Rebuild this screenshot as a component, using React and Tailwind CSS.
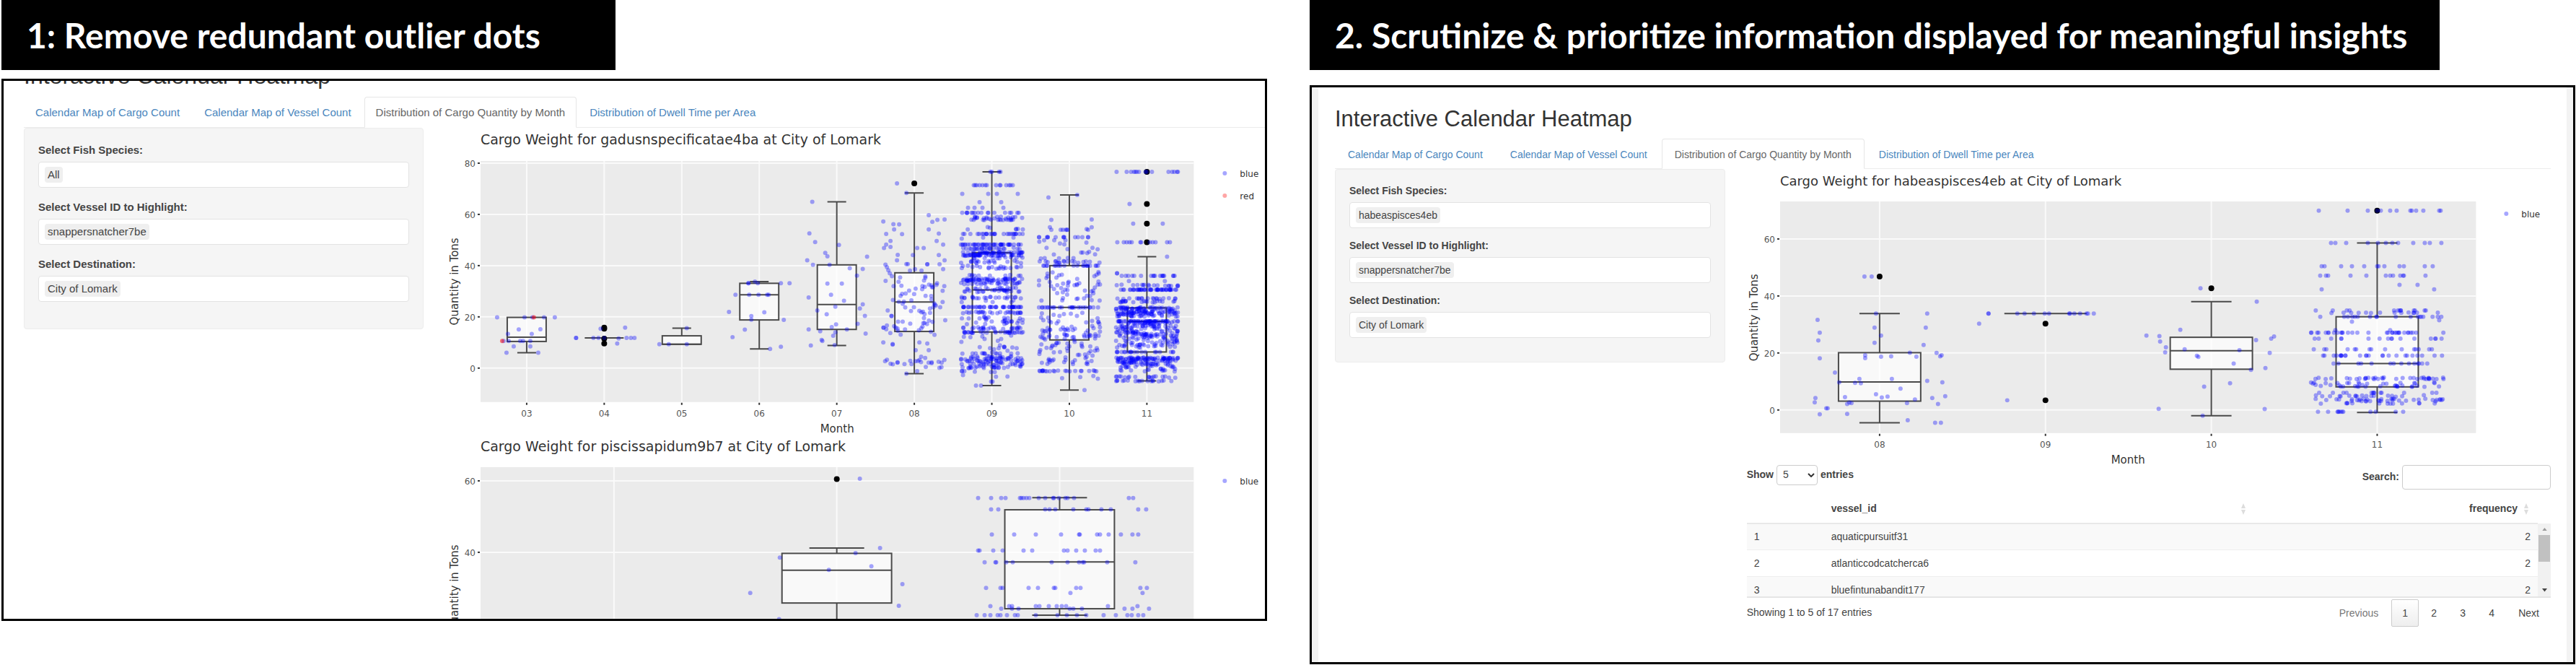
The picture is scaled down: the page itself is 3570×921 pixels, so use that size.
import { useState } from "react";

// small seeded generator so the jitter is the same on every render
const seeded = (seed) => {
  let s = seed;
  return () => {
    s = (s * 16807) % 2147483647;
    return s / 2147483647;
  };
};

const row = (tons, offsets) => offsets.map((dx) => [dx, tons]);

const gadusn = {
  title: "Cargo Weight for gadusnspecificatae4ba at City of Lomark",
  width: 1154,
  height: 428,
  titleSize: 19,
  titleY: 23,
  plot: { left: 66, right: 1055, top: 46, bottom: 380 },
  zeroY: 333,
  unit: 71 / 20,
  yTicks: [0, 20, 40, 60, 80],
  firstX: 130,
  stepX: 215 / 2,
  boxHalf: 27,
  capHalf: 13,
  jitter: 43,
  months: [
    {
      name: "03",
      box: [6, 10.4, 12.1, 19.8, 19.8],
      points: [
        ...row(19.8, [-41, -3, 8, 24, 39]),
        [-11, 15.1], [19, 15.2], [-26, 13.3], [7, 13.3],
        ...row(10.6, [-32, -25, -9, -5, 5]),
        [-18, 8.5], [5, 8.5], [-28, 6], [16, 6],
      ],
      red: [[10, 19.8], [-34, 10.6]],
    },
    {
      name: "04",
      box: [11.8, 11.8, 11.8, 11.8, 11.8],
      outliers: [15.8, 15.4, 11.5, 9.6],
      points: [
        ...row(11.8, [-39, -39, -15, -8, 0, 31, 37, 42]),
        [20, 11.6], [29, 15.8], [-5, 15.4], [18, 9.6],
      ],
    },
    {
      name: "05",
      box: [9.3, 9.3, 9.3, 12.6, 15.6],
      points: [...row(9.3, [-31, -18, 7]), [7, 15.6]],
    },
    {
      name: "06",
      box: [7.5, 18.8, 28.6, 33.1, 33.8],
      points: [
        ...row(33.1, [-15, -15, -2, 30, 42]),
        [-6, 33.8],
        ...row(28.6, [-33, -14, -1, 11, 13]),
        [-42, 21.9], [7, 21.8], [-11, 20.3], [-11, 18.9], [34, 18.8],
        [-20, 15], [-37, 12.1], [15, 7.5], [30, 8.3],
      ],
    },
    {
      name: "07",
      box: [8.8, 15.1, 24.8, 40.3, 64.9],
      points: [
        [-34, 64.9], [-38, 52.6], [-30, 49.2], [3, 48.1], [-16, 45],
        [-13, 43.6], [-41, 42.1], [-33, 40.3], [-10, 40.3], [18, 39],
        [36, 38.7], [42, 43.5], [28, 36.1], [-13, 33], [7, 33],
        [-8, 28.6], [-39, 27.6], [10, 26.3], [-2, 24], [36, 24.9],
        [32, 23.3], [-27, 22.5], [-14, 21], [39, 20.4], [29, 17.3],
        [-1, 17.1], [-7, 16], [-39, 15.1], [14, 15.1], [-23, 14.4],
        [-2, 14], [40, 13.5], [-5, 12.6], [-21, 11], [-20, 10.6],
        [-36, 8.8], [-3, 9],
      ],
    },
    {
      name: "08",
      box: [-2.2, 14.3, 25.8, 37.2, 68.4],
      outliers: [72.1],
      points: [
        [-24, 72.1], [-11, 68.4], [-43, 57.2], [-29, 56.2], [-21, 56.1],
        [-28, 54.1], [-39, 52.4], [-17, 52.3], [-33, 49.6], [-39, 48.2],
        [-42, 46.9], [-33, 47.3], [20, 59.7], [25, 57.1], [32, 57.9],
        [42, 58], [20, 54.1], [34, 52.5], [31, 49.6], [40, 48.2],
        [4, 46.9], [13, 46.9], [-23, 44.2], [-24, 42.1], [-2, 44.1],
        [34, 44.1], [42, 42.1], [-9, 40.6], [-11, 40.6], [18, 40.5],
        [18, 40.5], [35, 40.5], [40, 38.6], [-6, 38.1], [1, 38.6],
        [10, 38.1], [-40, 40.4], [-38, 39.4], [-36, 38.2], [-34, 37],
        [-31, 35.9], [-11, -2.2], [4, -1.2], [-43, 10], [-30, 9.4],
        [-30, 9.2], [7, 10], [18, 9.6], [2, 7], [20, 7], [28, 13],
      ],
      // [from tons, to tons, how many]
      bands: [
        [30, 36, 14], [26, 33, 16], [22, 26, 16], [16, 22, 18],
        [13, 16, 12], [2, 4.5, 12], [0, 3, 12],
      ],
    },
    {
      name: "09",
      box: [-6.8, 14.1, 30.5, 45, 76.6],
      points: [
        ...row(76.6, [-2, 0, 10, 12]),
        ...row(71.4, [-25, -23, -21, -17, -13, -9, -7, 6, 11, 12, 20, 24, 26, 29]),
        ...row(68, [-41, -5, 7, 36]),
        ...row(64.8, [-17, 13]),
        ...row(62.6, [-33, -24, -13, 16]),
        ...row(-5.3, [-1, 1]),
        ...row(-6.8, [-22, -15]),
      ],
      bands: [
        [60.6, 60.6, 17], [58.3, 59.2, 18], [57.8, 58, 14], [54, 55.4, 7],
        [52.4, 52.4, 26], [50.5, 51, 3], [48.2, 48.2, 42], [46.4, 47, 26],
        [44.8, 45.3, 38], [43.8, 44.3, 44], [42.8, 43.4, 10],
        [41, 42, 18], [38.6, 40, 20], [36, 36.4, 10], [34, 35, 50],
        [32.6, 33.6, 26], [29.6, 31.6, 36], [27.2, 27.8, 22], [25.5, 26.5, 5],
        [23.8, 23.8, 40], [21.4, 22, 26], [18, 20, 22], [17, 18, 8],
        [15.2, 16, 24], [13.6, 14.2, 30], [9, 13, 8], [6, 9, 12],
        [5.6, 5.8, 12], [2.5, 4.8, 46], [1, 3, 36], [0, 0.8, 22],
        [-1.6, -1, 6], [-3.4, -2.6, 3],
      ],
    },
    {
      name: "10",
      box: [-8.6, 11, 23.7, 40, 67.6],
      points: [
        [-29, 66.6], [11, 67.6], [-25, 57.9], [31, 58], [-27, 55],
        [-25, 54], [31, 55], [24, 54.3], [26, 54],
        ...row(54, [-12, -9, -5, -3, -3]),
        ...row(51.1, [-42, -42, -31, -30, -30, -19, -8, -8, -7, 8, 12, 18, 26, 26]),
        [21, -8.6],
      ],
      bands: [
        [48, 50, 7], [46, 47, 4], [44, 45.5, 6], [42.5, 43, 5],
        [41, 41.8, 18], [40, 40, 20], [33, 37.5, 18], [27, 33, 28],
        [26, 26.6, 4], [23.7, 23.7, 24], [16, 22, 22], [13.5, 16, 20],
        [11, 13.5, 26], [6, 10.5, 26], [1, 6, 26], [-1.3, -0.9, 22],
        [-5, -2.5, 4],
      ],
    },
    {
      name: "11",
      box: [-5, 6.3, 18.3, 23.5, 43.5],
      outliers: [76.6, 64.1, 56.4, 49.1],
      points: [
        ...row(76.6, [-42, -28, -22, -18, -16, -14, -11, -2, 0, 7, 30, 35, 38, 42, 43]),
        [-24, 64.1], [-19, 56.4], [22, 56.4],
        ...row(49.1, [-41, -32, -28, -24, -21, -9, -8, 4, 8, 12, 28, 32]),
        [28, 43.5],
      ],
      bands: [
        [37, 37, 2], [36, 36, 18], [34, 34, 2], [32, 32.6, 18],
        [30.6, 30.6, 46], [27, 27.3, 18], [25.6, 26.2, 20], [23, 23.8, 44],
        [20, 22.6, 90], [18.3, 18.3, 46], [15.6, 18, 56], [11.4, 15.6, 86],
        [8, 11.4, 48], [6.3, 6.3, 20], [3.2, 4.2, 60], [1.5, 3.5, 50],
        [-1.3, 1.5, 34], [-3.8, -3.2, 18], [-5.2, -4.8, 18],
      ],
    },
  ],
  xTitle: "Month",
  yTitleY: 213,
  legend: ["blue", "red"],
  legendY: 63,
  legendX: 1098,
};

// only the upper part of this chart fits in the panel, so it has no x axis
const piscis = {
  title: "Cargo Weight for piscissapidum9b7 at City of Lomark",
  width: 1154,
  height: 252,
  titleSize: 19,
  titleY: 20,
  plot: { left: 66, right: 1055, top: 42, bottom: 252 },
  zeroY: 358,
  unit: 99 / 20,
  yTicks: [40, 60],
  firstX: 251,
  stepX: 309,
  boxHalf: 76,
  capHalf: 38,
  jitter: 120,
  months: [
    { name: "09", points: [] },
    {
      name: "10",
      box: [19, 25.8, 35, 39.7, 41.2],
      outliers: [60.5],
      points: [
        [32, 60.6], [60, 41.2], [26, 39.8], [-79, 38.5], [-11, 35.1],
        [48, 36.1], [91, 31.1], [-120, 28.6], [86, 25], [-80, 21.3],
      ],
    },
    {
      name: "11",
      box: [22.4, 24.2, 37.3, 51.9, 55.3],
      points: [
        ...row(55.2, [-113, -95, -81, -75, -55, -53, -50, -46, -42, -29, -20, -9, -8, -1, 8, 11, 20, 96, 102]),
        ...row(52, [-95, -85, -20, -14, -6, 19, 37, 40, 58, 71, 109, 120]),
        ...row(45, [-94, -63, -33, 2, 27, 28, 52, 56, 68, 85, 101, 109]),
        ...row(40.5, [-113, -111, -92, -79, -50, -38, 6, 11, 23, 35, 50, 56]),
        ...row(37.2, [-104, -89, -88, -74, -65, -11, 11, 27, 32, 34, 66, 105]),
        ...row(30, [-102, -82, -79, -43, -30, -8, -6, 23, 29, 112, 121]),
        ...row(28.6, [15, 115]),
        ...row(24.9, [-96, -70, -66, -33, -28, -15, -4, 3, 9, 67, 108]),
        ...row(24.2, [-81, -57, -66, 14, 19, 31, 90, 101, 124]),
        ...row(22.4, [-115, -104, -96, -86, -82, -73, -62, -58, -33, -3, 10, 24, 37, 61, 78, 94, 100, 109, 116]),
      ],
    },
  ],
  yTitleY: 210,
  legend: ["blue"],
  legendY: 61,
  legendX: 1098,
};

const habeas = {
  title: "Cargo Weight for habeaspisces4eb at City of Lomark",
  width: 1132,
  height: 410,
  titleSize: 18,
  titleY: 23,
  plot: { left: 63, right: 1028, top: 45, bottom: 366 },
  zeroY: 334,
  unit: 79 / 20,
  yTicks: [0, 20, 40, 60],
  firstX: 201,
  stepX: 230,
  boxHalf: 57,
  capHalf: 28,
  jitter: 92,
  months: [
    {
      name: "08",
      box: [-4.5, 3.1, 9.8, 20.1, 33.8],
      outliers: [46.8],
      points: [
        [-21, 46.8], [-11, 46.8], [-86, 31.6], [-83, 27.1], [-85, 24.4],
        [-83, 18.1], [-62, 13.1], [-56, 9.7], [-89, 4.2], [-90, 2.7],
        [-74, 0.6], [-72, 0.6], [-83, -1.5], [-5, 33.8], [66, 33.8],
        [-7, 28.9], [64, 28.9], [2, 26.1], [-7, 23.6], [61, 22.8],
        [42, 20.1], [79, 20], [86, 19.2], [84, 18.8], [-20, 19.2],
        [-20, 18.2], [2, 18.7], [16, 18.8], [51, 18.7], [-28, 10.9],
        [17, 10.9], [-34, 9.5], [-26, 9.4], [66, 10.2], [87, 9.7],
        [29, 7.5], [-5, 5.5], [11, 4.7], [3, 4.4], [-48, 4.5],
        [91, 4.8], [73, 4.2], [49, 3.7], [-45, 2.1], [-42, 2.6],
        [-39, 2.4], [38, 2.4], [81, 2.1], [-45, -1.4], [39, -3.6],
        [77, -4.5], [85, -4.5],
      ],
    },
    {
      name: "09",
      box: [33.8, 33.8, 33.8, 33.8, 33.8],
      outliers: [30.3, 3.4],
      points: [
        ...row(33.8, [-79, -79, -39, -29, -16, -1, 5, 33, 34, 40, 48, 57, 59, 67]),
        [-92, 30.3], [-53, 3.4],
      ],
    },
    {
      name: "10",
      box: [-2, 14.3, 20.8, 25.5, 38],
      outliers: [42.7],
      points: [
        [-15, 42.7], [63, 38], [-43, 28.1], [-72, 25.9], [-71, 24],
        [-90, 26.1], [-63, 22], [-64, 20.2], [-37, 21.3], [-20, 19],
        [-18, 18.6], [39, 21], [31, 16.3], [55, 14.1], [62, 24.5],
        [83, 25], [87, 25.8], [81, 20], [75, 14.7], [26, 9.4],
        [-10, 8.2], [-73, 0.4], [-12, -2], [74, 0.3],
      ],
    },
    {
      name: "11",
      box: [-0.9, 8.1, 16.3, 32.7, 58.6],
      outliers: [69.9],
      points: [
        ...row(69.9, [-81, -41, -13, 0, 5, 18, 27, 46, 48, 54, 64, 86, 88]),
        ...row(58.6, [-64, -58, -43, -13, 1, 12, 21, 29, 50, 66, 73, 89]),
        ...row(50.4, [-77, -73, -50, -35, -18, 0, 2, 10, 31, 37, 66, 77]),
        ...row(47.1, [-79, -71, -68, -37, -15, 12, 18, 22, 32, 36, 37, 67]),
        [31, 43.9], [56, 43.9], [-77, 42.3], [79, 42.3],
        [-35, 31], [86, 31.5], [-58, 28], [18, 28],
      ],
      bands: [
        [34.9, 34.9, 13], [34, 34.2, 14], [32.7, 32.7, 18], [27.1, 27.1, 32],
        [25, 25, 16], [21.3, 21.3, 15], [19.1, 19.1, 25], [16.3, 16.3, 14],
        [10.8, 11.4, 36], [9.2, 9.7, 17], [8.1, 8.8, 23], [6, 6, 13],
        [4.6, 5.2, 18], [3, 4, 36], [2.2, 2.4, 13], [-0.6, -0.6, 12],
      ],
    },
  ],
  xTitle: "Month",
  yTitleY: 206,
  legend: ["blue"],
  legendY: 62,
  legendX: 1070,
};

const BoxPlot = ({ chart }) => {
  const { plot, months, unit, zeroY, firstX, stepX, boxHalf, capHalf } = chart;
  const y = (tons) => zeroY - tons * unit;
  const x = (i) => firstX + i * stepX;
  const rand = seeded(4711);

  return (
    <svg
      viewBox={`0 0 ${chart.width} ${chart.height}`}
      className="block h-auto w-full overflow-hidden font-['DejaVu_Sans',Verdana,sans-serif]"
      role="img"
      aria-label={chart.title}
    >
      <text x={plot.left} y={chart.titleY} fontSize={chart.titleSize} fill="#333">
        {chart.title}
      </text>
      <rect
        x={plot.left}
        y={plot.top}
        width={plot.right - plot.left}
        height={plot.bottom - plot.top}
        fill="#ebebeb"
      />
      {chart.yTicks.map((tick) => (
        <g key={tick}>
          <path d={`M${plot.left} ${y(tick)}H${plot.right}`} stroke="#fafafa" strokeWidth="2" />
          <path d={`M${plot.left - 4} ${y(tick)}h3`} stroke="#333" strokeWidth="2" />
          <text x={plot.left - 7} y={y(tick) + 5} fontSize="12" textAnchor="end" fill="#555">
            {tick}
          </text>
        </g>
      ))}
      {months.map((month, i) => (
        <g key={month.name}>
          <path d={`M${x(i)} ${plot.top}V${plot.bottom}`} stroke="#fafafa" strokeWidth="2" />
          {chart.xTitle && (
            <>
              <path d={`M${x(i)} ${plot.bottom + 1}v3`} stroke="#333" strokeWidth="2" />
              <text x={x(i)} y={plot.bottom + 20} fontSize="12" textAnchor="middle" fill="#555">
                {month.name}
              </text>
            </>
          )}
        </g>
      ))}

      {months.map((month, i) => {
        if (!month.box) return null;
        const [low, q1, median, q3, high] = month.box;
        const cx = x(i);
        return (
          <g key={month.name} stroke="#4a4a4a" strokeWidth="2" fill="none">
            <rect
              x={cx - boxHalf}
              y={y(q3)}
              width={boxHalf * 2}
              height={y(q1) - y(q3)}
              fill="#fff"
              fillOpacity="0.7"
            />
            <path d={`M${cx - boxHalf} ${y(median)}h${boxHalf * 2}`} />
            {high > q3 && (
              <path d={`M${cx} ${y(q3)}V${y(high)}M${cx - capHalf} ${y(high)}h${capHalf * 2}`} />
            )}
            {low < q1 && (
              <path d={`M${cx} ${y(q1)}V${y(low)}M${cx - capHalf} ${y(low)}h${capHalf * 2}`} />
            )}
            {month.outliers?.map((tons) => (
              <circle key={tons} cx={cx} cy={y(tons)} r="4" fill="#000" stroke="none" />
            ))}
          </g>
        );
      })}

      {months.map((month, i) => {
        const points = [...month.points];
        month.bands?.forEach(([from, to, count]) => {
          for (let n = 0; n < count; n++) {
            points.push([(rand() * 2 - 1) * chart.jitter, from + rand() * (to - from)]);
          }
        });
        return (
          <g key={month.name} fill="#00f" fillOpacity="0.35">
            {points.map(([dx, tons], n) => (
              <circle key={n} cx={x(i) + dx} cy={y(tons)} r="3" />
            ))}
            {month.red?.map(([dx, tons], n) => (
              <circle key={n} cx={x(i) + dx} cy={y(tons)} r="3" fill="#f00" fillOpacity="0.5" />
            ))}
          </g>
        );
      })}

      {chart.xTitle && (
        <text
          x={(plot.left + plot.right) / 2}
          y={plot.bottom + 42}
          fontSize="15"
          textAnchor="middle"
          fill="#333"
        >
          {chart.xTitle}
        </text>
      )}
      <text
        transform={`translate(${plot.left - 31} ${chart.yTitleY}) rotate(-90)`}
        fontSize="15"
        textAnchor="middle"
        fill="#333"
      >
        Quantity in Tons
      </text>
      {chart.legend.map((name, i) => (
        <g key={name}>
          <circle
            cx={chart.legendX}
            cy={chart.legendY + i * 31}
            r="3"
            fill={name}
            fillOpacity="0.35"
          />
          <text x={chart.legendX + 21} y={chart.legendY + 5 + i * 31} fontSize="12" fill="#333">
            {name}
          </text>
        </g>
      ))}
    </svg>
  );
};

const tabs = [
  "Calendar Map of Cargo Count",
  "Calendar Map of Vessel Count",
  "Distribution of Cargo Quantity by Month",
  "Distribution of Dwell Time per Area",
];

const Tabs = ({ tabClass }) => (
  <nav className="flex items-end gap-[2px] border-b border-[#ececec] leading-5">
    {tabs.map((tab, i) => (
      <a
        key={tab}
        href="#"
        className={`-mb-px rounded-t border whitespace-nowrap ${tabClass} ${
          i === 2
            ? "border-[#e6e6e6] border-b-white bg-white text-[#666]"
            : "border-transparent text-[#4a86bd]"
        }`}
      >
        {tab}
      </a>
    ))}
  </nav>
);

const Field = ({ id, label, value }) => (
  <div>
    <label htmlFor={id} className="block leading-5 font-bold text-[#444]">
      {label}
    </label>
    <div className="mt-[6px] flex h-9 items-center rounded border border-[#e3e3e3] bg-white px-2">
      <span className="rounded-sm bg-[#efefef] px-1 leading-[22px] text-[#444]">{value}</span>
      <input id={id} type="text" className="min-w-0 flex-1 outline-none" />
    </div>
  </div>
);

const Sidebar = ({ id, species, className }) => (
  <form className={`flex flex-col self-start rounded border border-[#ececec] bg-[#f5f5f5] px-[19px] ${className}`}>
    <Field id={`${id}-species`} label="Select Fish Species:" value={species} />
    <Field id={`${id}-vessel`} label="Select Vessel ID to Highlight:" value="snappersnatcher7be" />
    <Field id={`${id}-destination`} label="Select Destination:" value="City of Lomark" />
  </form>
);

const SortIcon = () => (
  <svg width="8" height="16" viewBox="0 0 8 16" fill="#ddd" className="shrink-0">
    <path d="M4 0l3 7H1zM4 16l3-7H1z" />
  </svg>
);

const vessels = ["aquaticpursuitf31", "atlanticcodcatcherca6", "bluefintunabandit177"];

const VesselTable = () => {
  const [page, setPage] = useState(1);
  const [search, setSearch] = useState("");

  return (
    <section className="pl-[17px] text-[#444]">
      <div className="flex items-start justify-between font-bold">
        <div className="flex items-center gap-1">
          <label htmlFor="length">Show</label>
          <span className="relative">
            <select
              id="length"
              defaultValue="5"
              className="h-7 w-[57px] appearance-none rounded border border-[#ccc] bg-white pl-2 font-normal"
            >
              <option>5</option>
              <option>10</option>
            </select>
            <svg
              viewBox="0 0 10 6"
              className="pointer-events-none absolute top-[11px] right-1 w-[10px] fill-none stroke-[#333]"
              strokeWidth="2"
            >
              <path d="M1 1l4 4 4-4" />
            </svg>
          </span>
          <span>entries</span>
        </div>
        <div className="flex items-center gap-1">
          <label htmlFor="search">Search:</label>
          <input
            id="search"
            type="search"
            value={search}
            onChange={(e) => setSearch(e.target.value)}
            className="h-[34px] w-[206px] rounded border border-[#ccc] px-2 font-normal outline-none"
          />
        </div>
      </div>

      <div className="mt-2 flex h-[142px] items-end overflow-hidden border-b-2 border-[#e5e5e5]">
        <table className="w-full table-fixed self-start">
          <thead>
            <tr className="h-[39px] border-b-2 border-[#e8e8e8] text-left">
              <th className="w-[105px]" />
              <th className="pl-3">
                <span className="flex items-center justify-between">
                  vessel_id <SortIcon />
                </span>
              </th>
              <th className="w-[404px] pr-3">
                <span className="flex items-center justify-end gap-2">
                  frequency <SortIcon />
                </span>
              </th>
            </tr>
          </thead>
          <tbody>
            {vessels.map((vessel, i) => (
              <tr key={vessel} className="h-[37px] border-b border-[#eee] odd:bg-[#f9f9f9]">
                <td className="pl-[10px]">{i + 1}</td>
                <td className="pl-3">{vessel}</td>
                <td className="pr-[10px] text-right">2</td>
              </tr>
            ))}
          </tbody>
        </table>
        <div className="flex h-[101px] w-[18px] shrink-0 flex-col items-center bg-[#f1f1f1]">
          <svg viewBox="0 0 8 5" className="my-[6px] w-[7px] shrink-0 fill-[#999]">
            <path d="M4 0l4 5H0z" />
          </svg>
          <div className="h-[37px] w-4 bg-[#c1c1c1]" />
          <svg viewBox="0 0 8 5" className="mt-auto mb-[6px] w-[7px] shrink-0 fill-[#444]">
            <path d="M4 5l4-5H0z" />
          </svg>
        </div>
      </div>

      <div className="flex items-start justify-between">
        <p className="mt-[10px] leading-5">Showing 1 to 5 of 17 entries</p>
        <div className="mt-[2px] flex gap-[2px] leading-9">
          <button type="button" className="px-4 text-[#777]">
            Previous
          </button>
          {[1, 2, 3, 4].map((n) => (
            <button
              key={n}
              type="button"
              onClick={() => setPage(n)}
              className={`w-[38px] rounded-xs border ${
                n === page
                  ? "border-[#ccc] bg-linear-to-b from-white to-[#eee]"
                  : "border-transparent"
              }`}
            >
              {n}
            </button>
          ))}
          <button type="button" className="px-4">
            Next
          </button>
        </div>
      </div>
    </section>
  );
};

const Banner = ({ children, className }) => (
  <h2
    className={`bg-black pl-[35px] font-['Lato','Open_Sans',sans-serif] text-[48px] leading-[97px] font-bold whitespace-nowrap text-white ${className}`}
  >
    {children}
  </h2>
);

const App = () => {
  return (
    <main className="flex items-start gap-[59px] bg-white pr-px pl-[2px] font-['Liberation_Sans',Arial,sans-serif]">
      <section className="min-w-0 flex-1">
        <Banner className="w-[48.5%]">1: Remove redundant outlier dots</Banner>
        <div className="mt-3 overflow-hidden border-3 border-black pl-7 text-[15px]">
          <h1 className="-mt-[25px] text-[32px] leading-9 text-[#333]">
            Interactive Calendar Heatmap
          </h1>
          <div className="mt-[11px]">
            <Tabs tabClass="px-[15px] pt-[11px] pb-[10px]" />
          </div>
          <div className="grid grid-cols-[554fr_1154fr] gap-[13px]">
            <Sidebar id="first" species="All" className="gap-[17px] pt-[20px] pb-[37px]" />
            <div>
              <BoxPlot chart={gadusn} />
              <BoxPlot chart={piscis} />
            </div>
          </div>
        </div>
      </section>

      <section className="min-w-0 flex-1">
        <Banner className="w-[89.3%]">
          2. Scrutinize &amp; prioritize information displayed for meaningful insights
        </Banner>
        <div className="mt-[21px] border-3 border-black bg-[#f3f3f3] px-[9px]">
          <div className="bg-white pt-[26px] pr-[22px] pb-[49px] pl-[23px] text-[14px]">
            <h1 className="text-[31px] leading-9 text-[#333]">Interactive Calendar Heatmap</h1>
            <div className="mt-[9px]">
              <Tabs tabClass="px-[17px] pt-[11px] pb-[9px]" />
            </div>
            <div className="grid grid-cols-[541fr_1132fr] gap-[13px]">
              <Sidebar id="second" species="habeaspisces4eb" className="gap-[14px] pt-[19px] pb-[33px]" />
              <div>
                <BoxPlot chart={habeas} />
                <VesselTable />
              </div>
            </div>
          </div>
        </div>
      </section>
    </main>
  );
};

export default App;
